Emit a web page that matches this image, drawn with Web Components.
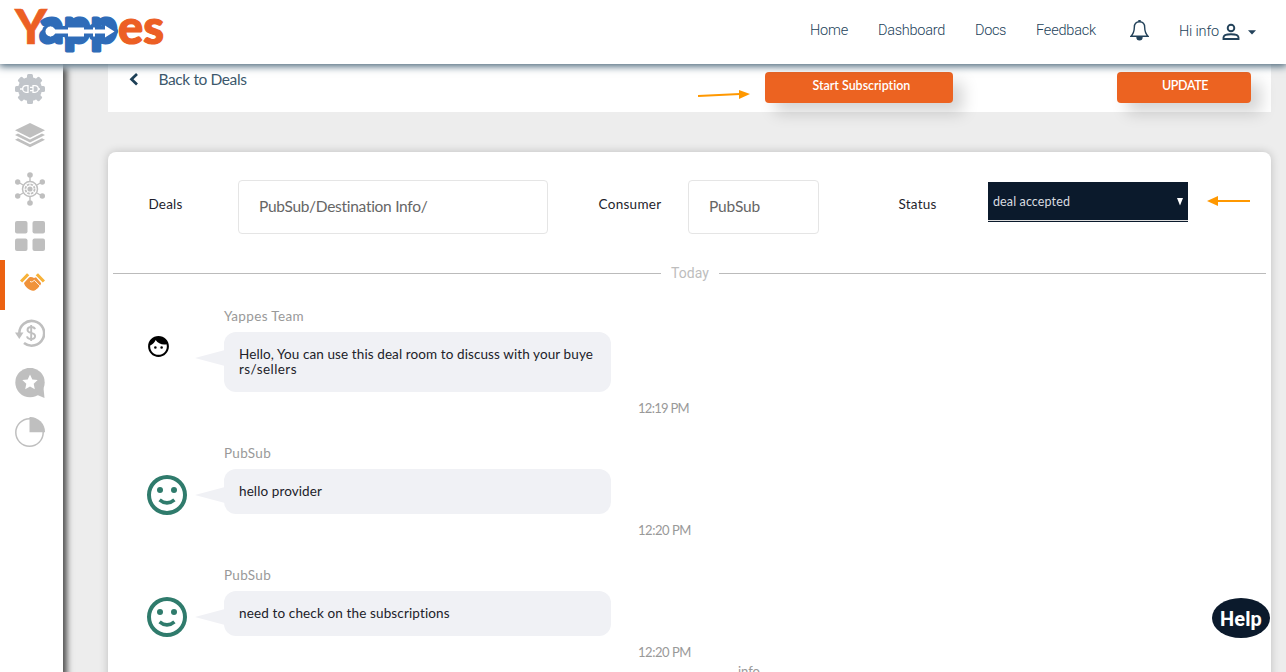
<!DOCTYPE html>
<html lang="en">
<head>
<meta charset="utf-8">
<title>Yappes - Deal room</title>
<style>
html,body{margin:0;height:100%;overflow:hidden;background:#ededed}
</style>
</head>
<body>
<deal-room></deal-room>
<script>
const define=(name,html,after)=>{
  const t=document.createElement('template');t.innerHTML=html;
  customElements.define(name,class extends HTMLElement{
    constructor(){super();this.attachShadow({mode:'open'}).append(t.content.cloneNode(true));}
    connectedCallback(){if(after)after(this,this.shadowRoot);}
  });
};

/* A single line of text tracked to a given measure. */
define('fit-text',`<style>:host{display:block;white-space:nowrap;flex:none}span{display:inline-block}</style><span><slot></slot></span>`,(el,root)=>{
  const w=+el.getAttribute('w'),s=root.querySelector('span');
  el.style.width=w+'px';
  const n=el.textContent.length;
  s.style.letterSpacing=((w-s.getBoundingClientRect().width)/n).toFixed(3)+'px';
});

/* The word is text; the connector arrow runs over its middle. */
define('brand-logo',`<style>:host{display:block;width:150px;height:46px}svg{display:block;overflow:visible}text{font-family:Lato,sans-serif;font-weight:900;font-size:47px}</style>
<svg width="150" height="46" viewBox="15 8 150 46">
<text x="15" y="43.500" fill="#ec5f24" stroke="#ec5f24" stroke-width=".6" textLength="32" lengthAdjust="spacingAndGlyphs">Y</text>
<text x="39.500" y="43" fill="#2f6cb8" stroke="#2f6cb8" stroke-width="3" stroke-linejoin="round" textLength="78" lengthAdjust="spacingAndGlyphs">app</text>
<text x="118" y="43.500" fill="#ec5f24" stroke="#ec5f24" stroke-width="1.200" textLength="46" lengthAdjust="spacingAndGlyphs">es</text>
<g stroke="#2f6cb8" stroke-width="7" stroke-linejoin="round" style="paint-order:stroke" fill="#fff"><path d="M46 29.500l4.500-3 4.500 3h13v-2h16v2h9v-2h2v2h10v-4l9.500 6-9.500 6v-4H95v3h-2v-3h-9v3H68v-3H55l-4.500 3-4.500-3z"/></g>
<circle cx="50.500" cy="31.500" r="5" fill="#fff"/>
</svg>`);

define('top-bar',`<style>
:host{display:flex;box-sizing:border-box;height:64px;padding:0 30px 0 15px;background:#fff;box-shadow:0 1px 8px 1px #3d5b70;position:relative;z-index:3;font:300 14.500px Roboto,sans-serif;color:#23425a}
brand-logo{margin-top:8px}
nav{display:flex;gap:30px;margin-left:auto;padding-top:22px;line-height:18px}
.bell{margin:20px 0 0 34px}
.user{display:flex;margin:22px 0 0 30px;line-height:20px}
.user svg{flex:none}
</style>
<brand-logo></brand-logo>
<nav><fit-text w="38">Home</fit-text><fit-text w="67">Dashboard</fit-text><fit-text w="31">Docs</fit-text><fit-text w="60">Feedback</fit-text></nav>
<svg class="bell" width="19" height="21" viewBox="0 0 19 21" fill="none" stroke="#23425a" stroke-width="1.400"><path d="M9.500 1.700C5.800 1.700 4.300 4.400 4.300 7.500c0 4.500-1.500 6.800-3.300 8.800h17c-1.800-2-3.300-4.300-3.300-8.800 0-3.100-1.500-5.800-5.200-5.800z"/><path d="M8.600 1.500a.9.900 0 0 1 1.800 0" /><path d="M7 17a2.500 2.800 0 0 0 5 0z" fill="#23425a"/></svg>
<div class="user"><fit-text w="40">Hi info</fit-text>
<svg width="18" height="18" viewBox="0 0 18 18" style="margin:1px 0 0 3px" fill="none" stroke="#23425a" stroke-width="1.900"><circle cx="9" cy="5" r="3.300"/><path d="M1.500 16v-1.500c0-2.200 3.800-3.300 7.500-3.300s7.500 1.100 7.500 3.300V16z"/></svg>
<svg width="8" height="5" viewBox="0 0 8 5" style="margin:8px 0 0 8px"><path d="M0 .3h8L4 4.500z" fill="#23425a"/></svg></div>`);

define('side-bar',`<style>
:host{display:block;width:63px;background:#fff;position:relative;z-index:2;box-shadow:3px 5px 6px 1px #505050;color:#bfbfbf}
div{display:flex;box-sizing:border-box;justify-content:center;align-items:center;padding-right:3px}
svg{display:block;flex:none}
.on{border-left:5px solid #ec6211;padding:0 4px 7px 0}
</style>
<div style="height:50px"><svg width="30" height="30" viewBox="-15 -15 30 30"><g fill="#c1c5ca"><circle r="12"/><g><rect x="-3" y="-15" width="6" height="30" rx="1.500"/><rect x="-15" y="-3" width="30" height="6" rx="1.500"/></g><g transform="rotate(45)"><rect x="-3" y="-15" width="6" height="30" rx="1.500"/><rect x="-15" y="-3" width="30" height="6" rx="1.500"/></g></g><g fill="none" stroke="#fff" stroke-width="1.300"><path d="M-10 0h3M-2-3.300h-2a3.300 3.300 0 0 0 0 6.600h2zM10 0h-1.500M3-3.300h2a3.300 3.300 0 0 1 0 6.600H3zM0-1.600h3M0 1.600h3"/></g></svg></div>
<div style="height:44px;padding-bottom:2px"><svg width="30" height="26" viewBox="0 0 30 26" fill="#bfbfbf"><path d="M15 1l15 7.300-15 7.500L0 8.300zM0 13l3-1.500 12 6 12-6 3 1.500-15 7.500zM0 17.800l3-1.500 12 6 12-6 3 1.500-15 7.500z"/></svg></div>
<div style="height:62px"><svg width="32" height="34" viewBox="-16 -17 32 34"><g fill="#bfbfbf" stroke="#bfbfbf" stroke-width="1.400"><path d="M0-14V-7M0 14V7M-12-7l6 3.500M12-7L6-3.500M-12 7l6-3.500M12 7L6 3.500"/><g stroke="none"><circle cy="-14" r="2.800"/><circle cy="14" r="2.800"/><circle cx="-12.300" cy="-7" r="2.700"/><circle cx="12.300" cy="-7" r="2.700"/><circle cx="-12.300" cy="7" r="2.700"/><circle cx="12.300" cy="7" r="2.700"/></g></g><g fill="none" stroke="#bfbfbf"><circle r="7.500" stroke-width="1.500"/><circle r="4.600" stroke-width="1.800" stroke-dasharray="2.600 1"/></g><circle r="2.600" fill="#bfbfbf"/></svg></div>
<div style="height:32px;margin-bottom:8px"><svg width="30" height="30" fill="#bfbfbf"><rect width="12.500" height="12.500" rx="2"/><rect x="17.500" width="12.500" height="12.500" rx="2"/><rect y="17.500" width="12.500" height="12.500" rx="2"/><rect x="17.500" y="17.500" width="12.500" height="12.500" rx="2"/></svg></div>
<div class="on" style="height:50px"><svg width="25" height="18" viewBox="0 0 25 18"><path d="M0 7.500L7 .3l2.300 2L2.200 9.500zM25 7.500L18 .3l-2.300 2 7.100 7.200z" fill="#f7b239"/><path d="M4 10l5-5.500c2-1 3.500-.3 5 .5l2-.7 5 5.700c.2 2-4.500 7.300-7.500 7.700-3 .5-9-4-9.500-7.700z" fill="#f0923a"/><path d="M10 8.500c2 1.300 3.500-.7 4.300-1.300l5 5M16 17.500c2.300-1.300 4-3.500 3.700-5.500" fill="none" stroke="#fff" stroke-width=".9"/></svg></div>
<div style="height:46px"><svg width="30" height="30" viewBox="0 0 30 30" fill="none" stroke="#bfbfbf"><path d="M4.300 15.500A12.400 12.400 0 1 1 9 25" stroke-width="2.600"/><path d="M0 14.500h8.500l-4.200 6.500z" fill="#bfbfbf" stroke="none"/><path d="M20 11.300c-.3-1.600-1.700-2.300-3.800-2.300-2.200 0-3.700 1-3.700 2.900 0 4.100 7.600 1.900 7.600 6.100 0 2-1.600 3-3.900 3-2.400 0-3.900-.9-4.200-2.700M16.200 7v16" stroke-width="1.900"/></svg></div>
<div style="height:54px"><svg width="30" height="30" viewBox="0 0 30 30"><circle cx="15" cy="14.500" r="14.700" fill="#bfbfbf"/><path d="M20 26l9.500 4-1-10z" fill="#bfbfbf"/><path d="M15 6.500l2.300 5 5.400.6-4 3.700 1.100 5.400-4.800-2.700-4.800 2.700 1.100-5.400-4-3.700 5.400-.6z" fill="#fff"/></svg></div>
<div style="height:44px"><svg width="30" height="30" viewBox="0 0 30 30"><circle cx="14.500" cy="15.500" r="13.700" fill="none" stroke="#bfbfbf" stroke-width="1.500"/><path d="M14.500 0A15 15 0 0 1 30 15.300H14.500z" fill="#bfbfbf"/></svg></div>`);

define('action-button',`<style>:host{display:flex;box-sizing:border-box;justify-content:center;height:31px;border-radius:4px;background:#ec6321;color:#fff;font:600 12.500px/28px Lato,sans-serif;box-shadow:10px 10px 16px rgba(0,0,0,.17);flex:none}</style><slot></slot>`);

define('tool-row',`<style>
:host{display:flex;box-sizing:border-box;height:48px;padding:8px 20px 0 21px;background:#fff;font:15.500px/18px Lato,sans-serif;color:#3c586c}
.chev{margin:1px 20px 0 0}
.back{margin:-2px 0 0 -.5px}
.arr{margin:17px 15px 0 auto}
</style>
<svg class="chev" width="10" height="13" viewBox="0 0 10 13"><path d="M8 1L2.500 6.200 8 11.500" fill="none" stroke="#1d4057" stroke-width="2.700"/></svg>
<fit-text class="back" w="88">Back to Deals</fit-text>
<svg class="arr" width="52" height="11" viewBox="0 0 52 11"><path d="M0 7l42-2" stroke="#ff9800" stroke-width="2"/><path d="M41 1l11 4-11 5z" fill="#ff9800"/></svg>
<action-button style="width:188px;margin-right:164px"><fit-text w="98" style="margin-left:5px">Start Subscription</fit-text></action-button>
<action-button style="width:134px"><fit-text w="46" style="margin-left:2px">UPDATE</fit-text></action-button>`);

define('field-box',`<style>:host{display:block;box-sizing:border-box;height:54px;border:1px solid #e5e5e5;border-radius:4px;padding-left:20px;font:15.500px/51px Lato,sans-serif;color:#666}</style><slot></slot>`);
define('status-select',`<style>:host{display:flex;box-sizing:border-box;height:40px;margin-top:2px;background:#0b1a2c;color:#d9dce0;padding:0 5px;justify-content:space-between;font:12.500px/40px Lato,sans-serif;background-image:linear-gradient(#ddd,#ddd);background-size:100% 1px;background-position:0 38px;background-repeat:no-repeat}svg{margin-top:16px}</style><slot></slot><svg width="6" height="8"><path d="M0 0h6L3 7.500z" fill="#fff"/></svg>`);

define('deal-fields',`<style>
:host{display:grid;grid-template-columns:90px 310px 50px 90px 131px 79px 90px 200px 19px 43px;padding:28px 0 0 40px;font:13.500px/48px Lato,sans-serif;color:#1e1e2c}
:host>fit-text{margin-left:.5px}
svg{margin-top:15px}
</style>
<fit-text w="34">Deals</fit-text><field-box><fit-text w="169">PubSub/Destination Info/</fit-text></field-box><i></i>
<fit-text w="63">Consumer</fit-text><field-box><fit-text w="51">PubSub</fit-text></field-box><i></i>
<fit-text w="38">Status</fit-text><status-select><fit-text w="77">deal accepted</fit-text></status-select><i></i>
<svg width="43" height="12"><path d="M9 6h34" stroke="#ff9800" stroke-width="2"/><path d="M0 6l11-5v10z" fill="#ff9800"/></svg>`);

define('day-divider',`<style>:host{display:flex;align-items:center;height:20px;margin:29px 5px 25px;gap:10px;font:14px/20px Roboto,sans-serif;color:#bdbdbd}:host::before,:host::after{content:"";flex:1;height:1px;background:#bbb}:host::before{flex:0 0 548px}</style><slot></slot>`);

define('chat-message',`<style>
:host{display:grid;grid-template-columns:38px 78px 387px 27px 1fr;grid-template-rows:16px 8px auto 8px 16px;margin-bottom:29px;font:13.500px/15px Lato,sans-serif;color:#999}
.name{grid-area:1/3;line-height:17px}
.time{grid-area:5/5;line-height:17px;font-size:13px}
.av{grid-area:3/2}
.av svg{display:block}
.bub{grid-area:3/3;position:relative;background:#f0f1f5;border-radius:12px;padding:15px;color:#212129;line-height:15px}
.bub::before{content:"";position:absolute;left:-29px;top:18px;width:30px;height:16px;background:#f0f1f5;clip-path:polygon(0 50%,100% 0,100% 100%)}
</style>
<div class="name"><slot name="name"></slot></div><div class="av"><slot name="avatar"></slot></div><div class="bub"><slot></slot></div><div class="time"><slot name="time"></slot></div>`);

define('user-face',`<style>:host{display:block}svg{display:block}</style><svg width="48" height="48" viewBox="0 0 24 24" fill="#2f7b6c"><path d="M12 2a10 10 0 1 0 0 20 10 10 0 0 0 0-20zm0 18a8 8 0 1 1 0-16 8 8 0 0 1 0 16z"/><circle cx="8.500" cy="9.500" r="1.500"/><circle cx="15.500" cy="9.500" r="1.500"/><path d="M8.300 14.400Q12 17.500 15.700 14.400" fill="none" stroke="#2f7b6c" stroke-width="1.800"/></svg>`);
define('team-face',`<style>:host{display:block}svg{display:block}</style><svg width="25" height="25" viewBox="0 0 24 24"><path d="M9 11.750a1.250 1.250 0 1 0 0 2.500 1.250 1.250 0 0 0 0-2.500zm6 0a1.250 1.250 0 1 0 0 2.500 1.250 1.250 0 0 0 0-2.500zM12 2C6.480 2 2 6.480 2 12s4.480 10 10 10 10-4.480 10-10S17.520 2 12 2zm0 18c-4.410 0-8-3.590-8-8 0-.29.020-.58.050-.86 2.360-1.050 4.230-2.980 5.210-5.370A9.974 9.974 0 0 0 17.420 10c.78 0 1.530-.09 2.250-.26.210.71.330 1.470.330 2.260 0 4.410-3.590 8-8 8z"/></svg>`);

define('help-badge',`<style>:host{position:absolute;left:1212px;top:598px;z-index:4;width:58px;height:40px;border-radius:50%;background:#0b1a2c;color:#fff;display:flex;justify-content:center;font:700 20px/42px Roboto,sans-serif}</style><slot></slot>`);

define('deal-room',`<style>
:host{display:block;height:672px;overflow:hidden;position:relative}
.body{display:flex;height:608px}
main{flex:1;min-width:0;padding:0 15px 0 45px}
.card{height:580px;margin-top:40px;background:#fff;border-radius:8px;box-shadow:0 0 10px rgba(0,0,0,.2)}
.next{margin:-26px 0 0 630px;font:13px/17px Lato,sans-serif;color:#999}
</style>
<top-bar></top-bar>
<div class="body"><side-bar></side-bar>
<main><tool-row></tool-row>
<section class="card"><deal-fields></deal-fields>
<day-divider><fit-text w="38">Today</fit-text></day-divider>
<chat-message><fit-text slot="name" w="80">Yappes Team</fit-text><team-face slot="avatar" style="margin:1.500px 0 0 0"></team-face><fit-text w="354">Hello, You can use this deal room to discuss with your buye</fit-text><fit-text w="58">rs/sellers</fit-text><fit-text slot="time" w="51">12:19 PM</fit-text></chat-message>
<chat-message><fit-text slot="name" w="47">PubSub</fit-text><user-face slot="avatar" style="margin:2px 0 -5px -3px"></user-face><fit-text w="83">hello provider</fit-text><fit-text slot="time" w="53">12:20 PM</fit-text></chat-message>
<chat-message><fit-text slot="name" w="47">PubSub</fit-text><user-face slot="avatar" style="margin:2px 0 -5px -3px"></user-face><fit-text w="211">need to check on the subscriptions</fit-text><fit-text slot="time" w="53">12:20 PM</fit-text></chat-message>
<div class="next"><fit-text w="22">info</fit-text></div>
</section></main></div>
<help-badge><fit-text w="42">Help</fit-text></help-badge>`);
</script>
</body>
</html>
